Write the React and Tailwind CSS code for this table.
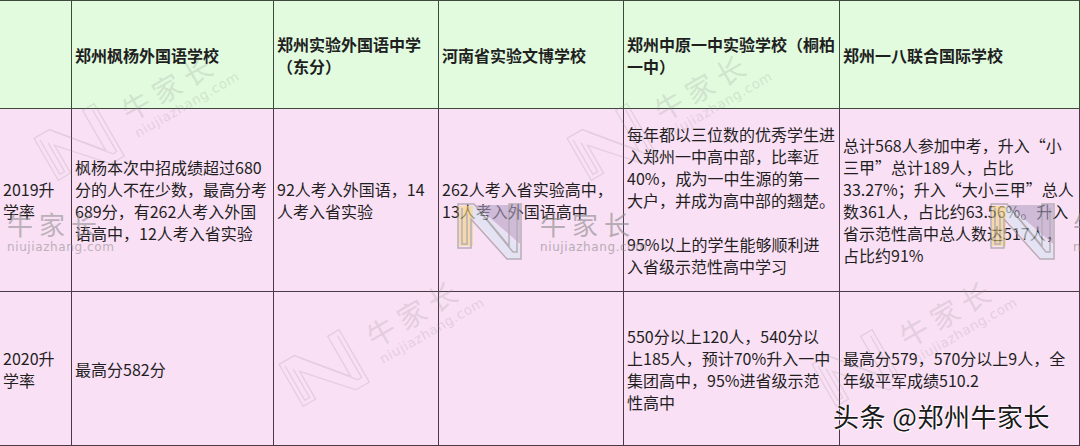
import React from "react";

const header = [
  [],
  ["郑州枫杨外国语学校"],
  ["郑州实验外国语中学", "（东分）"],
  ["河南省实验文博学校"],
  ["郑州中原一中实验学校（桐柏", "一中）"],
  ["郑州一八联合国际学校"],
];

const row2019 = [
  ["2019升", "学率"],
  ["枫杨本次中招成绩超过680", "分的人不在少数，最高分考", "689分，有262人考入外国", "语高中，12人考入省实验"],
  ["92人考入外国语，14", "人考入省实验"],
  ["262人考入省实验高中，", "13人考入外国语高中"],
  [
    "每年都以三位数的优秀学生进",
    "入郑州一中高中部，比率近",
    "40%，成为一中生源的第一",
    "大户，并成为高中部的翘楚。",
    "",
    "95%以上的学生能够顺利进",
    "入省级示范性高中学习",
  ],
  [
    "总计568人参加中考，升入“小",
    "三甲”总计189人，占比",
    "33.27%；升入“大小三甲”总人",
    "数361人，占比约63.56%。升入",
    "省示范性高中总人数达517人，",
    "占比约91%",
  ],
];

const row2020 = [
  ["2020升", "学率"],
  ["最高分582分"],
  [],
  [],
  ["550分以上120人，540分以", "上185人，预计70%升入一中", "集团高中，95%进省级示范", "性高中"],
  ["最高分579，570分以上9人，全", "年级平军成绩510.2"],
];

const Lines = ({ lines }) =>
  lines.map((l, i) => (
    <div key={i} className="whitespace-nowrap h-[22px]">
      {l}
    </div>
  ));

// watermark logo, outline only or filled
const Logo = ({ colored }) => (
  <svg width="66" height="58" viewBox="0 0 66 58" className="block">
    {colored && (
      <>
        <polygon points="2,4 16,4 16,44 2,44" fill="#f2d67e" />
        <polygon points="18,3 63,3 63,42" fill="#b3a3c6" />
        <polygon points="16,4 16,16 52,57 63,57 63,44 18,3" fill="#d6e6f3" />
      </>
    )}
    <g fill="none" stroke="#8c8c8c" strokeWidth={colored ? 1.5 : 1.2}>
      <polygon points="1,2 17,2 52,44 52,2 64,2 64,57 50,57 14,17 14,46 1,46" />
      <polyline points="5,6 5,42 10,42 10,12" />
      <polyline points="20,6 56,50 60,50 60,6" />
    </g>
  </svg>
);

const Mark = ({ colored }) => (
  <div className="flex items-start gap-[17px]">
    <Logo colored={colored} />
    <div className="flex flex-col pt-[6px]">
      <div className="text-[26px] leading-[32px] tracking-[6px] text-[#8a8a8a]">牛家长</div>
      <div className="text-[12px] leading-[14px] tracking-[0.6px] text-[#8a8a8a] font-['DejaVu_Sans',sans-serif]">
        niujiazhang.com
      </div>
    </div>
  </div>
);

const Cell = ({ lines, head }) => (
  <div
    className={`flex items-center px-[3px] border-r border-b ${
      head ? "bg-[#e2fbdf] border-[#3b4a3b] border-t font-bold" : "bg-[#fae0f5] border-[#4a3a48]"
    }`}
  >
    <div>
      <Lines lines={lines} />
    </div>
  </div>
);

export default function App() {
  return (
    <div className="relative w-[1080px] h-[446px] overflow-hidden font-['Noto_Sans_CJK_SC','Noto_Sans',sans-serif] text-[16px] leading-[22px] text-[#1f1f1f]">
      <div className="grid grid-cols-[72px_202px_165px_185px_216px_240px] grid-rows-[109px_183px_154px]">
        {header.map((l, i) => (
          <Cell key={"h" + i} lines={l} head />
        ))}
        {row2019.map((l, i) => (
          <Cell key={"a" + i} lines={l} />
        ))}
        {row2020.map((l, i) => (
          <Cell key={"b" + i} lines={l} />
        ))}
      </div>

      {/* watermarks */}
      <div className="absolute inset-0 pointer-events-none">
        <div className="absolute left-[-76px] top-[202px] opacity-55">
          <Mark />
        </div>
        <div className="absolute left-[457px] top-[202px] opacity-60">
          <Mark colored />
        </div>
        <div className="absolute left-[990px] top-[202px] opacity-60">
          <Mark colored />
        </div>

        <div className="absolute left-[32px] top-[137px] origin-top-left rotate-[-30deg] scale-[1.1] opacity-20">
          <Mark />
        </div>
        <div className="absolute left-[565px] top-[137px] origin-top-left rotate-[-30deg] scale-[1.1] opacity-20">
          <Mark />
        </div>
        <div className="absolute left-[277px] top-[363px] origin-top-left rotate-[-30deg] scale-[1.1] opacity-20">
          <Mark />
        </div>
        <div className="absolute left-[810px] top-[363px] origin-top-left rotate-[-30deg] scale-[1.1] opacity-20">
          <Mark />
        </div>

        <div className="absolute left-[833px] top-[399px] text-[26px] leading-[34px] tracking-[0.5px] text-[#1a1a1a] whitespace-nowrap [text-shadow:0_0_2px_#fff,0_0_2px_#fff,1px_1px_1px_#fff]">
          头条 @郑州牛家长
        </div>
      </div>
    </div>
  );
}
